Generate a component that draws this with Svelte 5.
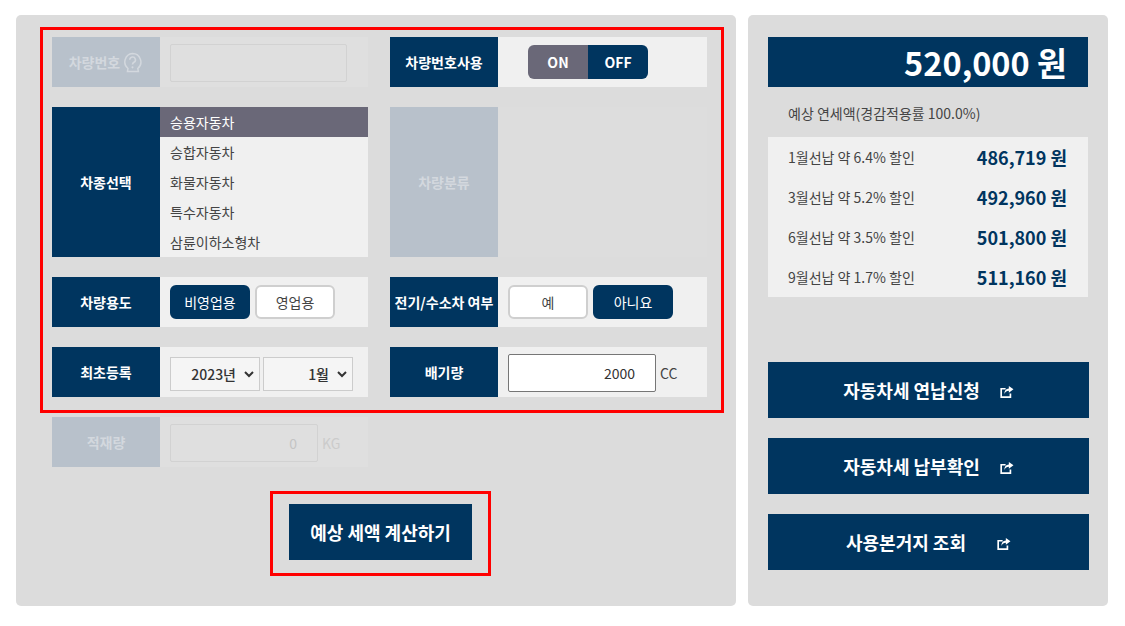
<script>
	const carTypes = ['승용자동차', '승합자동차', '화물자동차', '특수자동차', '삼륜이하소형차'];
	const discounts = [
		{ label: '1월선납 약 6.4% 할인', amount: '486,719 원' },
		{ label: '3월선납 약 5.2% 할인', amount: '492,960 원' },
		{ label: '6월선납 약 3.5% 할인', amount: '501,800 원' },
		{ label: '9월선납 약 1.7% 할인', amount: '511,160 원' }
	];
	const links = [
		{ label: '자동차세 연납신청' },
		{ label: '자동차세 납부확인' },
		{ label: '사용본거지 조회', wide: true }
	];

	let carType = $state(carTypes[0]);
	let numberOn = $state(false);
	let business = $state(false);
	let electric = $state(false);
	let year = $state('2023년');
	let month = $state('1월');
	let cc = $state('2000');
</script>

<main class="page">
	<section class="panel form">
		<div class="grid">
			<div class="row off">
				<div class="label">차량번호
					<svg class="help" width="21" height="21" viewBox="0 0 20 20" aria-hidden="true">
						<path d="M10 1.5a8 8 0 0 1 5 14.2l.6 2.8H5.2l.5-2.8A8 8 0 0 1 10 1.5z" fill="none" stroke="currentColor" stroke-width="1.4" />
						<path d="M7.4 7.4a2.7 2.7 0 1 1 4 2.4c-1 .6-1.4 1-1.4 2.2" fill="none" stroke="currentColor" stroke-width="1.5" />
						<circle cx="10" cy="14.6" r="1" fill="currentColor" />
					</svg>
				</div>
				<div class="body unit-body"><input class="text wide" disabled /></div>
			</div>
			<div class="row">
				<div class="label">차량번호사용</div>
				<div class="body toggle-body">
					<div class="toggle">
						<button class:navy={numberOn} onclick={() => (numberOn = true)}>ON</button>
						<button class:navy={!numberOn} onclick={() => (numberOn = false)}>OFF</button>
					</div>
				</div>
			</div>

			<div class="row tall">
				<div class="label">차종선택</div>
				<ul class="types">
					{#each carTypes as type}
						<li class:selected={carType === type} onclick={() => (carType = type)}>{type}</li>
					{/each}
				</ul>
			</div>
			<div class="row tall off blank">
				<div class="label">차량분류</div>
				<div class="body"></div>
			</div>

			<div class="row">
				<div class="label">차량용도</div>
				<div class="body choices">
					<button class="choice" class:on={!business} onclick={() => (business = false)}>비영업용</button>
					<button class="choice" class:on={business} onclick={() => (business = true)}>영업용</button>
				</div>
			</div>
			<div class="row">
				<div class="label">전기/수소차 여부</div>
				<div class="body choices">
					<button class="choice" class:on={electric} onclick={() => (electric = true)}>예</button>
					<button class="choice" class:on={!electric} onclick={() => (electric = false)}>아니요</button>
				</div>
			</div>

			<div class="row">
				<div class="label">최초등록</div>
				<div class="body selects">
					<select bind:value={year}>
						<option>2022년</option>
						<option>2023년</option>
					</select>
					<select bind:value={month}>
						<option>1월</option>
						<option>2월</option>
					</select>
				</div>
			</div>
			<div class="row">
				<div class="label">배기량</div>
				<div class="body unit-body">
					<input class="text" bind:value={cc} />
					<span>CC</span>
				</div>
			</div>

			<div class="row off">
				<div class="label">적재량</div>
				<div class="body unit-body">
					<input class="text" value="0" disabled />
					<span>KG</span>
				</div>
			</div>
		</div>

		<div class="calc">
			<button>예상 세액 계산하기</button>
		</div>

		<div class="marker"></div>
	</section>

	<aside class="panel result">
		<div class="total">520,000 원</div>
		<p class="note">예상 연세액(경감적용률 100.0%)</p>
		<ul class="discounts">
			{#each discounts as d}
				<li><span>{d.label}</span><strong>{d.amount}</strong></li>
			{/each}
		</ul>
		<div class="links">
			{#each links as link}
				<button class:wide={link.wide}>
					{link.label}
					<svg width="14" height="12" viewBox="0 0 15 13" aria-hidden="true">
						<path d="M6 3H1.2v9h10V8" fill="none" stroke="currentColor" stroke-width="1.8" />
						<path d="M9.5 0l5 3.6-5 3.6V5.2C7.4 5.2 5.8 6.2 4.6 8.6c0-3.6 1.8-5.8 4.9-6z" fill="currentColor" />
					</svg>
				</button>
			{/each}
		</div>
	</aside>
</main>

<style>
	:global(body) {
		background: #fff;
		font-family: 'Noto Sans CJK KR', 'Noto Sans', sans-serif;
		font-size: 14px;
		color: #333;
	}

	button,
	input,
	select {
		font: inherit;
		cursor: pointer;
	}

	ul {
		list-style: none;
		margin: 0;
		padding: 0;
	}

	.page {
		display: flex;
		gap: 12px;
		padding: 15px 16px 20px;
		height: 591px;
		box-sizing: content-box;
	}

	.panel {
		background: #dcdcdc;
		border-radius: 5px;
	}

	.form {
		position: relative;
		width: 720px;
		padding: 22px 29px 0 36px;
		box-sizing: border-box;
	}

	.grid {
		display: grid;
		grid-template-columns: 316px 317px;
		column-gap: 22px;
		row-gap: 20px;
	}

	.row {
		display: flex;
		height: 50px;
		background: #f0f0f0;
	}

	.row.tall {
		height: 150px;
	}

	.label {
		flex: none;
		width: 108px;
		display: flex;
		align-items: center;
		justify-content: center;
		background: #00355f;
		color: #fff;
		font-weight: 700;
		font-size: 14px;
		white-space: nowrap;
	}

	.body {
		flex: 1;
		display: flex;
		align-items: center;
		padding-left: 10px;
	}

	.off {
		background: #dfdfdf;
	}

	.off.blank {
		background: #dddddd;
	}

	.off .label {
		background: #b8c1cb;
		color: #d3d8de;
	}

	.help {
		margin-left: 2px;
		color: #d3d8de;
	}

	.toggle-body {
		padding-left: 30px;
	}

	.toggle {
		display: flex;
		height: 34px;
		border-radius: 6px;
		overflow: hidden;
	}

	.toggle button {
		width: 60px;
		border: 0;
		background: #6a6878;
		color: #fff;
		font-weight: 700;
		font-size: 14px;
	}

	.toggle button.navy {
		background: #00355f;
	}

	.types {
		flex: 1;
	}

	.types li {
		height: 30px;
		line-height: 30px;
		padding-left: 10px;
		color: #444;
		font-size: 14px;
		cursor: pointer;
	}

	.types li.selected {
		background: #6a6878;
		color: #fff;
	}

	.choices {
		gap: 5px;
	}

	.choice {
		width: 80px;
		height: 34px;
		box-sizing: border-box;
		border: 2px solid #cfcfcf;
		border-radius: 6px;
		background: #fff;
		color: #444;
		font-size: 14px;
		padding: 0;
	}

	.choice.on {
		border-color: #00355f;
		background: #00355f;
		color: #fff;
	}

	.selects {
		gap: 3px;
		padding-top: 4px;
	}

	select {
		appearance: none;
		box-sizing: border-box;
		width: 90px;
		height: 34px;
		padding: 0 23px 0 8px;
		border: 1px solid #ccc;
		background: #f5f5f5 url("data:image/svg+xml,%3Csvg xmlns='http://www.w3.org/2000/svg' width='10' height='7'%3E%3Cpath d='M1 1l4 4 4-4' fill='none' stroke='%23333' stroke-width='2'/%3E%3C/svg%3E") no-repeat right 5px center;
		color: #333;
		font-size: 14px;
		font-weight: 500;
		text-align: right;
	}

	.text {
		box-sizing: border-box;
		width: 148px;
		height: 38px;
		padding: 0 20px 0 8px;
		border: 1px solid #767676;
		border-radius: 2px;
		background: #fff;
		color: #333;
		text-align: right;
		font-size: 14px;
	}

	.text.wide {
		width: 177px;
	}

	.text:disabled {
		border-color: #d2d2d2;
		background: #dfdfdf;
		color: #c4c4c4;
		cursor: default;
	}

	.unit-body {
		gap: 4px;
		padding-top: 2px;
		color: #444;
		font-size: 14px;
	}

	.off .unit-body {
		color: #cbcbcb;
	}

	.calc {
		box-sizing: border-box;
		width: 221px;
		height: 85px;
		margin: 24px 0 0 218px;
		padding: 10px 16px;
		border: 3px solid #f00;
	}

	.calc button {
		width: 183px;
		height: 56px;
		border: 0;
		background: #00355f;
		color: #fff;
		font-size: 18px;
		font-weight: 700;
		padding: 0;
	}

	.marker {
		position: absolute;
		left: 24px;
		top: 12px;
		width: 684px;
		height: 386px;
		box-sizing: border-box;
		border: 3px solid #f00;
		pointer-events: none;
	}

	.result {
		width: 360px;
		padding: 22px 20px 0;
		box-sizing: border-box;
	}

	.total {
		height: 50px;
		line-height: 50px;
		padding-right: 21px;
		background: #00355f;
		color: #fff;
		font-size: 32.5px;
		font-weight: 700;
		text-align: right;
	}

	.note {
		margin: 0;
		height: 50px;
		line-height: 52px;
		padding-left: 20px;
		font-size: 14px;
		color: #444;
	}

	.discounts {
		padding: 0 21px 0 20px;
		background: #f0f0f0;
	}

	.discounts li {
		display: flex;
		align-items: center;
		justify-content: space-between;
		height: 40px;
		color: #444;
		font-size: 14px;
	}

	.discounts strong {
		color: #00355f;
		font-size: 18px;
		font-weight: 700;
	}

	.links {
		display: flex;
		flex-direction: column;
		gap: 20px;
		width: 321px;
		margin-top: 65px;
	}

	.links button {
		display: flex;
		align-items: center;
		justify-content: center;
		gap: 20px;
		height: 56px;
		border: 0;
		background: #00355f;
		color: #fff;
		font-size: 18px;
		font-weight: 700;
	}

	.links button.wide {
		gap: 31px;
	}

	.links svg {
		margin-top: 4px;
	}
</style>
